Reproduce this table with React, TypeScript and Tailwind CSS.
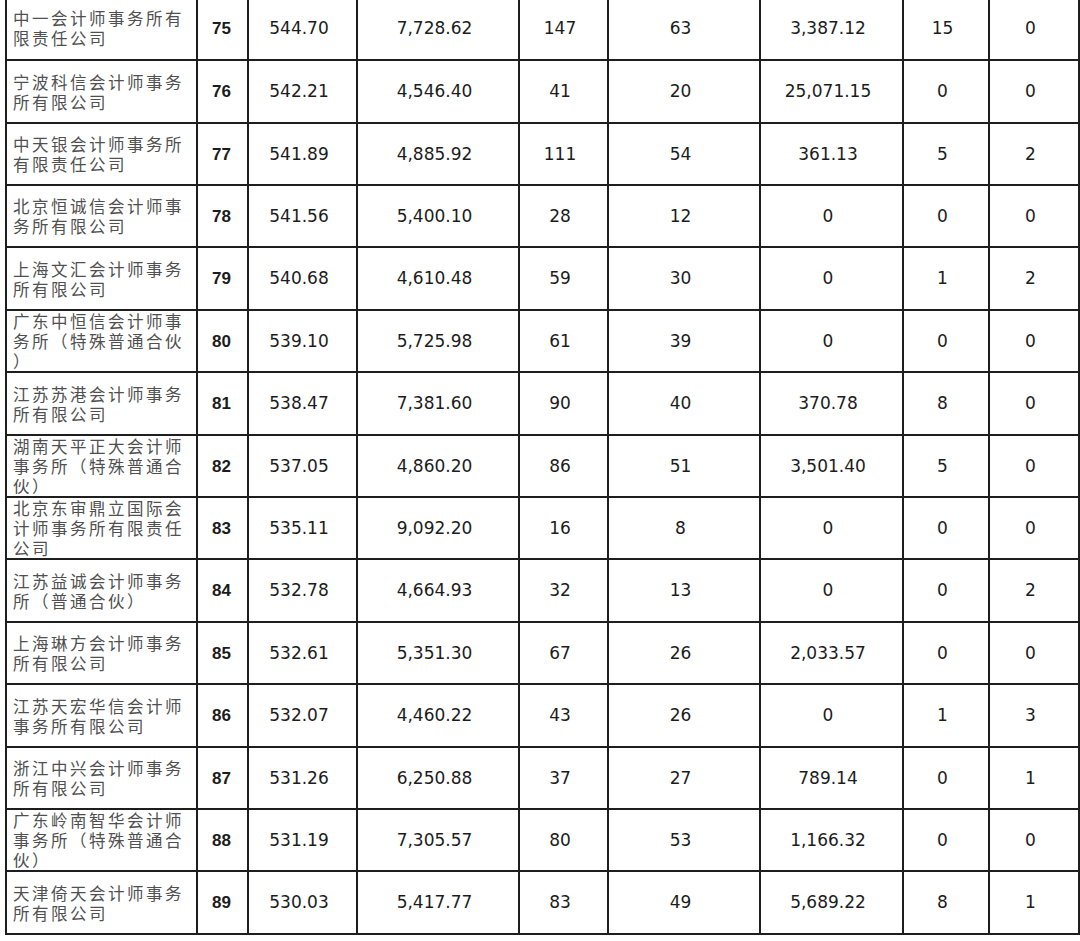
import React from "react";

type Row = [number, string, string, string, string, string, string, string, string];

const rows: Row[] = [
  [75, "中一会计师事务所有限责任公司", "544.70", "7,728.62", "147", "63", "3,387.12", "15", "0"],
  [76, "宁波科信会计师事务所有限公司", "542.21", "4,546.40", "41", "20", "25,071.15", "0", "0"],
  [77, "中天银会计师事务所有限责任公司", "541.89", "4,885.92", "111", "54", "361.13", "5", "2"],
  [78, "北京恒诚信会计师事务所有限公司", "541.56", "5,400.10", "28", "12", "0", "0", "0"],
  [79, "上海文汇会计师事务所有限公司", "540.68", "4,610.48", "59", "30", "0", "1", "2"],
  [80, "广东中恒信会计师事务所（特殊普通合伙）", "539.10", "5,725.98", "61", "39", "0", "0", "0"],
  [81, "江苏苏港会计师事务所有限公司", "538.47", "7,381.60", "90", "40", "370.78", "8", "0"],
  [82, "湖南天平正大会计师事务所（特殊普通合伙）", "537.05", "4,860.20", "86", "51", "3,501.40", "5", "0"],
  [83, "北京东审鼎立国际会计师事务所有限责任公司", "535.11", "9,092.20", "16", "8", "0", "0", "0"],
  [84, "江苏益诚会计师事务所（普通合伙）", "532.78", "4,664.93", "32", "13", "0", "0", "2"],
  [85, "上海琳方会计师事务所有限公司", "532.61", "5,351.30", "67", "26", "2,033.57", "0", "0"],
  [86, "江苏天宏华信会计师事务所有限公司", "532.07", "4,460.22", "43", "26", "0", "1", "3"],
  [87, "浙江中兴会计师事务所有限公司", "531.26", "6,250.88", "37", "27", "789.14", "0", "1"],
  [88, "广东岭南智华会计师事务所（特殊普通合伙）", "531.19", "7,305.57", "80", "53", "1,166.32", "0", "0"],
  [89, "天津倚天会计师事务所有限公司", "530.03", "5,417.77", "83", "49", "5,689.22", "8", "1"],
];

function chunk(s: string, n: number): string[] {
  const chars = Array.from(s);
  const out: string[] = [];
  for (let i = 0; i < chars.length; i += n) out.push(chars.slice(i, i + n).join(""));
  return out;
}

const numCell =
  "bg-white flex items-center justify-center pr-[7px] text-[17px] text-[#1c1c1c] font-['DejaVu_Sans',sans-serif] leading-none";

export default function App() {
  return (
    <div className="w-[1080px] h-[941px] overflow-hidden bg-white">
      <div className="ml-[5px] -mt-[3px] w-[1200px] grid grid-cols-[189px_49px_107px_160px_87px_150px_141px_84px_88px_100px] grid-rows-[62px_61px_60px_60px_61px_60px_61px_60px_60px_61px_60px_61px_60px_60px_61px] gap-[2px] bg-[#1e1e1e] pl-[2px] pb-[2px]">
        {rows.map((r) => (
          <React.Fragment key={r[0]}>
            <div className="bg-white flex flex-col justify-center pl-[6px] text-[16.5px] leading-[20px] tracking-[2.5px] text-[#505050] font-['Noto_Sans_CJK_SC',sans-serif] whitespace-nowrap">
              {chunk(r[1], 9).map((l, i) => (
                <div key={i} className="h-[20px] leading-[20px]">{l}</div>
              ))}
            </div>
            <div className="bg-white flex items-center justify-center pr-[2px] text-[17px] font-bold text-[#1c1c1c] font-['Liberation_Sans',sans-serif] leading-none">
              {r[0]}
            </div>
            <div className={numCell}>{r[2]}</div>
            <div className={numCell}>{r[3]}</div>
            <div className={numCell}>{r[4]}</div>
            <div className={numCell}>{r[5]}</div>
            <div className={numCell}>{r[6]}</div>
            <div className={numCell}>{r[7]}</div>
            <div className={numCell}>{r[8]}</div>
            <div className="bg-white" />
          </React.Fragment>
        ))}
      </div>
    </div>
  );
}
